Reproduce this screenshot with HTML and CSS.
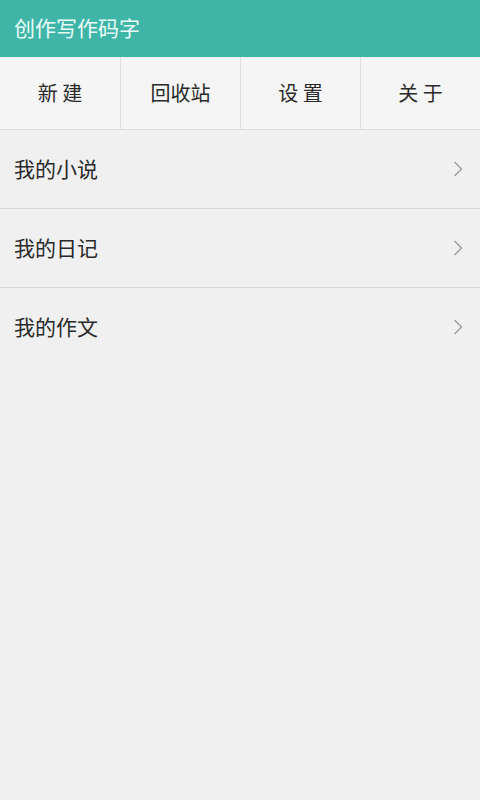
FILE: index.html
```html
<!DOCTYPE html>
<html lang="zh-CN">
<head>
<meta charset="utf-8">
<title>创作写作码字</title>
<link rel="stylesheet" href="styles.css">
</head>
<body>
<header class="appbar">
  <h1 class="title">创作写作码字</h1>
</header>
<nav class="toolbar">
  <div class="tool">新 建</div>
  <div class="tool">回收站</div>
  <div class="tool">设 置</div>
  <div class="tool">关 于</div>
</nav>
<ul class="list">
  <li class="row"><span class="label">我的小说</span><svg class="chev" viewBox="0 0 10 16" width="10" height="16"><path d="M1.5 1 L8.5 8 L1.5 15" fill="none" stroke="#9a9a9a" stroke-width="1.3"/></svg></li>
  <li class="row"><span class="label">我的日记</span><svg class="chev" viewBox="0 0 10 16" width="10" height="16"><path d="M1.5 1 L8.5 8 L1.5 15" fill="none" stroke="#9a9a9a" stroke-width="1.3"/></svg></li>
  <li class="row last"><span class="label">我的作文</span><svg class="chev" viewBox="0 0 10 16" width="10" height="16"><path d="M1.5 1 L8.5 8 L1.5 15" fill="none" stroke="#9a9a9a" stroke-width="1.3"/></svg></li>
</ul>
</body>
</html>
```

FILE: styles.css
```css
html, body {
  margin: 0;
  padding: 0;
  height: 100%;
}
body {
  background: #f0f0f0;
  font-family: "Noto Sans CJK SC", "Noto Sans", sans-serif;
  color: #2b2b2b;
}
.appbar {
  height: 57px;
  background: #3fb5a8;
  display: flex;
  align-items: center;
  padding: 0 14px 3px;
  box-sizing: border-box;
}
.title {
  margin: 0;
  font-size: 21px;
  font-weight: normal;
  color: #eafcf8;
  line-height: 1;
}
.toolbar {
  display: grid;
  grid-template-columns: repeat(4, 1fr);
  height: 72px;
  background: #f5f5f5;
  border-bottom: 1px solid #dcdcdc;
}
.tool {
  display: flex;
  align-items: center;
  justify-content: center;
  padding-bottom: 2px;
  font-size: 20px;
  color: #2a2a2a;
  border-left: 1px solid #dedede;
}
.tool:first-child {
  border-left: none;
}
.list {
  list-style: none;
  margin: 0;
  padding: 0;
}
.row {
  height: 78px;
  box-sizing: content-box;
  display: flex;
  align-items: center;
  justify-content: space-between;
  padding: 0 17px 0 14px;
  border-bottom: 1px solid #d8d8d8;
}
.label {
  font-size: 21px;
  color: #2a2a2a;
  margin-bottom: 3px;
}
.row.last {
  border-bottom: none;
}
.chev {
  display: block;
}
```
